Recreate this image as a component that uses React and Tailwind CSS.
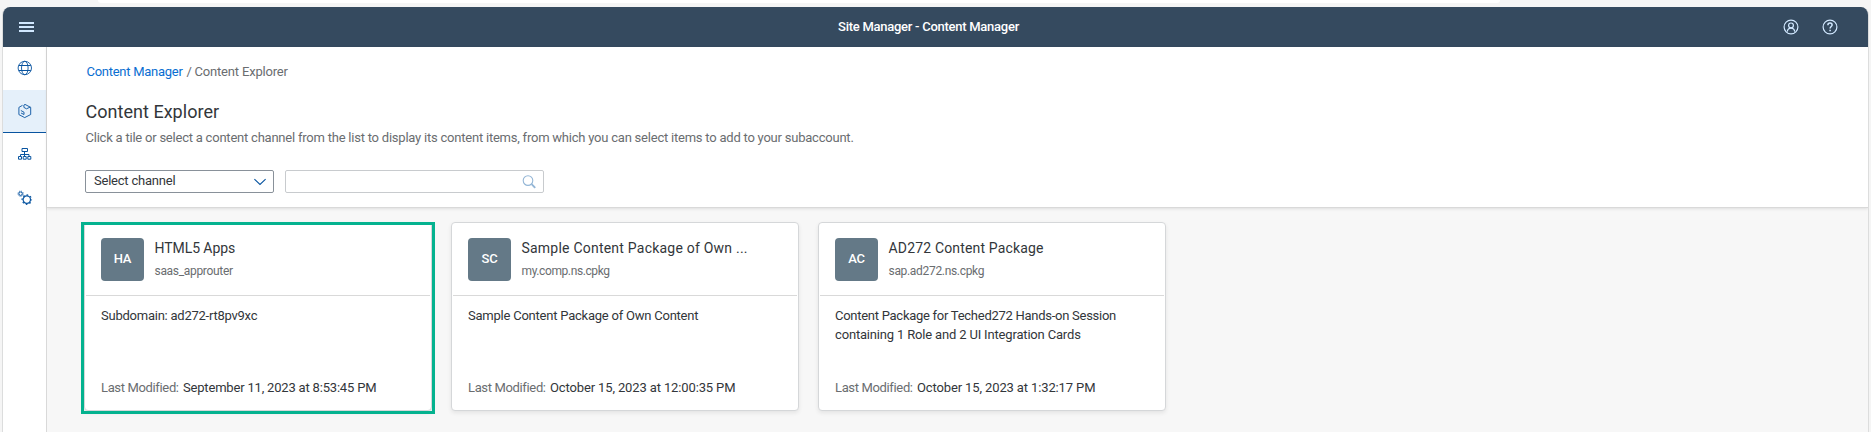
const GlobeIcon = () => (
  <svg className="block h-4 w-4" viewBox="0 0 16 16" fill="none" stroke="#0854a0" strokeWidth="0.9">
    <circle cx="7.8" cy="8" r="6.7" />
    <ellipse cx="7.8" cy="8" rx="3.3" ry="6.7" />
    <path d="M1.8 5.5h12M1.8 10.5h12" strokeWidth="1" />
  </svg>
);

const ContentIcon = () => (
  <svg className="block h-4 w-4" viewBox="0 0 16 16" fill="none" stroke="#0854a0" strokeWidth="0.9" strokeLinejoin="round" strokeLinecap="round">
    <path d="M5.2 2.5 1.9 4.4v7.2L7.7 14.6l6-3.1V4.4L8 1.4 6.9 2.1v2.3l2.6 1.4 3.4-1.6" />
    <path d="M4.2 7.7 7 9.2v2.3L4.4 10.2" />
  </svg>
);

const HierarchyIcon = () => (
  <svg className="block h-4 w-4" viewBox="0 0 16 16" fill="none" stroke="#0854a0" strokeWidth="1">
    <path d="M5 2.5h5.5v3H5zM7.5 6v4.5M3.5 10.5v-2h8.5v2" />
    <path d="M1.5 10.5h3v2.7h-3zM6.2 10.5h3v2.7h-3zM10.8 10.5h3v2.7h-3z" />
  </svg>
);

const GearsIcon = () => (
  <svg className="block h-4 w-4" viewBox="0 0 16 16" fill="none" stroke="#0854a0">
    <circle cx="3.6" cy="3.7" r="1.7" strokeWidth="1" />
    <circle cx="3.6" cy="3.7" r="2.6" strokeWidth="0.9" strokeDasharray="1.02 1.02" />
    <circle cx="9.8" cy="9.6" r="3.7" strokeWidth="1.2" />
    <circle cx="9.8" cy="9.6" r="4.7" strokeWidth="1.2" strokeDasharray="1.6 2.09" strokeDashoffset="0.8" />
  </svg>
);

const UserIcon = () => (
  <svg className="block h-4 w-4" viewBox="0 0 16 16" fill="none" stroke="#d1e8ff" strokeWidth="1.2">
    <circle cx="8" cy="8" r="6.9" />
    <circle cx="8" cy="6.4" r="2.4" />
    <path d="M4.2 12.6C4.6 10.4 6 9.2 8 9.2s3.4 1.2 3.8 3.4" />
  </svg>
);

const HelpIcon = () => (
  <svg className="block h-4 w-4" viewBox="0 0 16 16" fill="none" stroke="#d1e8ff" strokeWidth="1.2">
    <circle cx="8" cy="8" r="6.9" />
    <path d="M5.9 6.2C5.9 4.9 6.8 4.1 8 4.1s2.1.8 2.1 1.9c0 1.4-2 1.6-2 3.5" strokeWidth="1.5" />
    <path d="M7.3 11.4h1.6" strokeWidth="1.5" />
  </svg>
);

const Card = ({ initials, title, titleClass, sub, subClass, lines, date, dateClass, className }) => (
  <article className={`flex h-[189px] flex-col rounded-[4px] border border-[#d5d7d9] bg-white px-px shadow-[0_2px_4px_rgba(0,0,0,0.08)] ${className}`}>
    <header className="flex h-[73px] shrink-0 border-b border-[#d9d9d9] pl-[15px] pt-[15px]">
      <div className="flex h-[43px] w-[43px] items-center justify-center rounded-[4px] bg-[#647987] pb-[2px] text-[13px] font-medium leading-[19px] tracking-[-0.3px] text-white">
        {initials}
      </div>
      <div className="ml-[10.5px] whitespace-nowrap">
        <h2 className={`text-[14px] leading-[20px] text-[#32363a] ${titleClass}`}>{title}</h2>
        <p className={`mt-[5px] text-[12px] leading-[16px] text-[#6a6d70] ${subClass}`}>{sub}</p>
      </div>
    </header>
    <div className="flex grow flex-col justify-between pb-[13px] pl-[15px] pt-[10px] text-[13px] leading-[19px] text-[#32363a]">
      <div className="whitespace-nowrap">
        {lines.map(([text, cls]) => (
          <p key={text} className={cls}>{text}</p>
        ))}
      </div>
      <p className="flex whitespace-nowrap">
        <span className="w-[82px] tracking-[-0.35px] text-[#6a6d70]">Last Modified:</span>
        <span className={dateClass}>{date}</span>
      </p>
    </div>
  </article>
);

export default function App() {
  return (
    <div className="flex h-[432px] w-[1871px] flex-col overflow-hidden bg-[#f5f5f5] font-['Roboto','Liberation_Sans',sans-serif]">
      <div className="h-[7px] shrink-0">
        <div className="ml-[98px] h-[3px] w-[1402px] rounded-b-[8px] bg-white" />
      </div>
      <div className="ml-[2px] flex w-[1867px] grow flex-col overflow-hidden rounded-t-[8px] border-x border-[#dcdddd] bg-white">
        <header className="flex h-[40px] shrink-0 items-center justify-between bg-[#354a5f] pl-[16px] pr-[30px]">
          <div className="flex w-[100px] flex-col gap-[2px]">
            <span className="h-[2px] w-[15px] bg-[#d1e8ff]" />
            <span className="h-[2px] w-[15px] bg-[#d1e8ff]" />
            <span className="h-[2px] w-[15px] bg-[#d1e8ff]" />
          </div>
          <h1 className="pb-px text-[13px] font-medium leading-[19px] tracking-[-0.265px] text-white">
            Site Manager - Content Manager
          </h1>
          <div className="flex w-[100px] justify-end gap-[23.5px]">
            <UserIcon />
            <HelpIcon />
          </div>
        </header>
        <div className="flex grow">
          <nav className="flex w-[44px] shrink-0 flex-col border-r border-[#d9d9d9]">
            <div className="flex h-[43px] items-center pb-px pl-[14px]"><GlobeIcon /></div>
            <div className="flex h-[43px] items-center border-b border-[#0854a0] bg-[#e5f0fa] pl-[14px]"><ContentIcon /></div>
            <div className="flex h-[43px] items-center pb-px pl-[14px]"><HierarchyIcon /></div>
            <div className="flex h-[43px] items-center pl-[14px] pt-px"><GearsIcon /></div>
          </nav>
          <main className="flex grow flex-col bg-[#f7f7f7]">
            <section className="flex h-[161px] shrink-0 flex-col border-b border-[#d9d9d9] bg-white pl-[38px] pt-[15px] shadow-[0_1px_3px_rgba(0,0,0,0.1)]">
              <div className="flex pl-[1.5px] text-[13px] leading-[19px] text-[#6a6d70]">
                <span className="w-[100px] tracking-[-0.27px] text-[#0a6ed1]">Content Manager</span>
                <span className="w-[8px]">/</span>
                <span className="tracking-[-0.18px]">Content Explorer</span>
              </div>
              <h2 className="mt-[18px] pl-[0.5px] text-[18px] leading-[25px] tracking-[0.03px] text-[#32363a]">Content Explorer</h2>
              <p className="mt-[4px] pl-[0.5px] text-[13px] leading-[19px] tracking-[-0.222px] text-[#6a6d70]">
                Click a tile or select a content channel from the list to display its content items, from which you can select items to add to your subaccount.
              </p>
              <div className="mt-[23px] flex gap-[11px]">
                <div className="flex h-[23px] w-[189px] items-start justify-between rounded-[2px] border border-[#89919a] pl-[8px] pr-[6px]">
                  <span className="text-[13px] leading-[19px] tracking-[-0.22px] text-[#32363a]">Select channel</span>
                  <svg className="mt-[5px] block h-[12px] w-[14px]" viewBox="0 0 14 12" fill="none" stroke="#0854a0" strokeWidth="1.1">
                    <path d="M1.4 3.2 7 8.4l5.6-5.2" />
                  </svg>
                </div>
                <div className="flex h-[23px] w-[259px] items-center justify-end rounded-[2px] border border-[#c8cbce] pr-[7px]">
                  <svg className="block h-[14px] w-[14px]" viewBox="0 0 14 14" fill="none" stroke="#94b6d6" strokeWidth="1.1">
                    <circle cx="6" cy="5.6" r="4.8" />
                    <path d="m9.6 9.2 3.6 3.6" strokeWidth="1.9" />
                  </svg>
                </div>
              </div>
            </section>
            <section className="flex items-start pl-[37px] pt-[14px]">
              <div className="relative">
                <Card
                  className="w-[348px]"
                  initials="HA"
                  title="HTML5 Apps"
                  titleClass="tracking-[-0.07px]"
                  sub="saas_approuter"
                  subClass="tracking-[-0.317px]"
                  lines={[["Subdomain: ad272-rt8pv9xc", "tracking-[-0.24px]"]]}
                  date="September 11, 2023 at 8:53:45 PM"
                  dateClass="tracking-[-0.186px]"
                />
                <div className="absolute -bottom-[3px] -left-[3px] -right-[3px] top-0 border-[3px] border-[#04b28f]" />
              </div>
              <Card
                className="ml-[19px] w-[348px]"
                initials="SC"
                title="Sample Content Package of Own ..."
                titleClass="tracking-[0.222px]"
                sub="my.comp.ns.cpkg"
                subClass="tracking-[-0.393px]"
                lines={[["Sample Content Package of Own Content", "tracking-[-0.226px]"]]}
                date="October 15, 2023 at 12:00:35 PM"
                dateClass="tracking-[-0.13px]"
              />
              <Card
                className="ml-[19px] w-[348px]"
                initials="AC"
                title="AD272 Content Package"
                titleClass="tracking-[0.165px]"
                sub="sap.ad272.ns.cpkg"
                subClass="tracking-[-0.314px]"
                lines={[
                  ["Content Package for Teched272 Hands-on Session", "tracking-[-0.27px]"],
                  ["containing 1 Role and 2 UI Integration Cards", "tracking-[-0.17px]"],
                ]}
                date="October 15, 2023 at 1:32:17 PM"
                dateClass="tracking-[-0.124px]"
              />
            </section>
          </main>
        </div>
      </div>
    </div>
  );
}
